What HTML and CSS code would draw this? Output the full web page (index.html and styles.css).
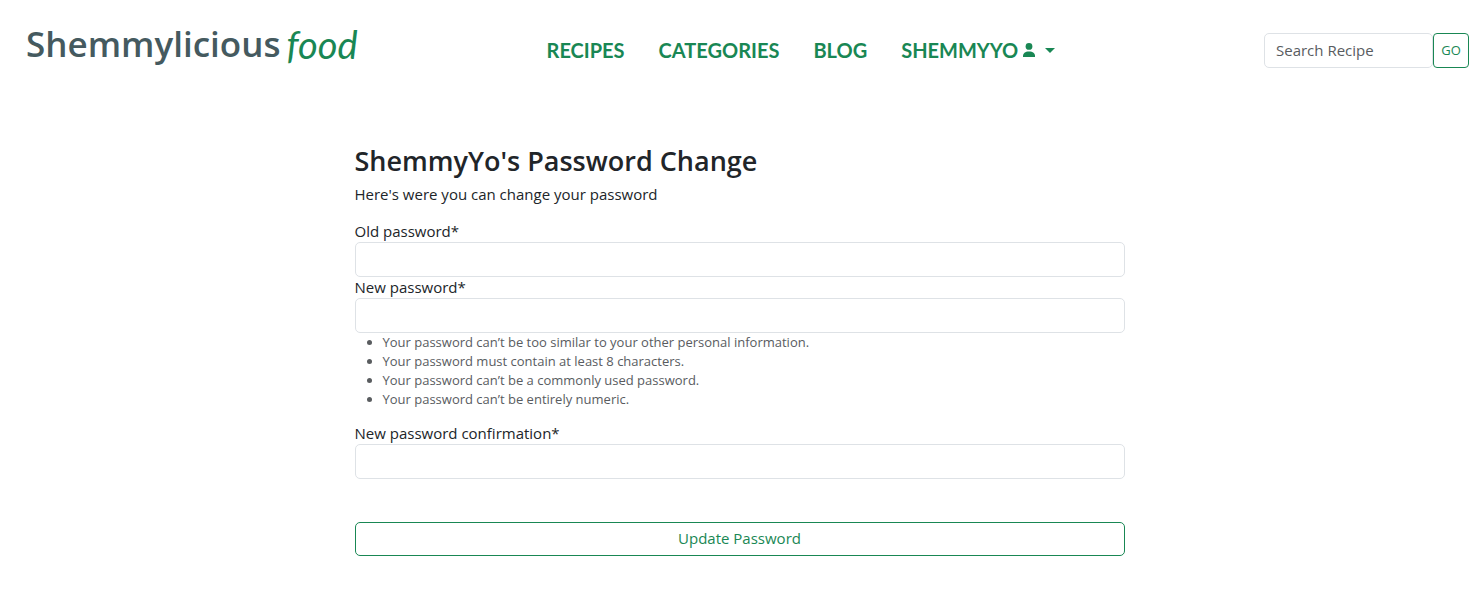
FILE: index.html
```html
<!DOCTYPE html>
<html lang="en">
<head>
<meta charset="utf-8">
<meta name="viewport" content="width=device-width, initial-scale=1">
<title>Password Change</title>
<link rel="stylesheet" href="styles.css">
</head>
<body>
<header class="header">
  <a class="brand" href="#"><span class="brand-name">Shemmylicious</span><span class="brand-script">food</span></a>
  <nav class="nav">
    <a class="nav-link" href="#">RECIPES</a>
    <a class="nav-link" href="#">CATEGORIES</a>
    <a class="nav-link" href="#">BLOG</a>
    <a class="nav-link" href="#">SHEMMYYO
      <svg class="user-icon" viewBox="0 0 12 14" aria-hidden="true"><circle cx="6" cy="3.400" r="3.400"/><path d="M0 14v-1c0-2.800 2-4.600 6-4.600s6 1.800 6 4.600v1z"/></svg>
      <svg class="caret" viewBox="0 0 10 5" aria-hidden="true"><path d="M0 0h10L5 5z"/></svg>
    </a>
  </nav>
  <form class="search">
    <input class="field search-field" type="search" placeholder="Search Recipe" aria-label="Search Recipe">
    <button class="button go-button" type="submit">GO</button>
  </form>
</header>
<main class="content">
  <h1 class="title">ShemmyYo's Password Change</h1>
  <p class="intro">Here's were you can change your password</p>
  <form class="form">
    <label class="label" for="old">Old password*</label>
    <input class="field" id="old" type="password">
    <label class="label" for="new">New password*</label>
    <input class="field" id="new" type="password" aria-describedby="rules">
    <ul class="rules" id="rules">
      <li>Your password can’t be too similar to your other personal information.</li>
      <li>Your password must contain at least 8 characters.</li>
      <li>Your password can’t be a commonly used password.</li>
      <li>Your password can’t be entirely numeric.</li>
    </ul>
    <label class="label" for="confirm">New password confirmation*</label>
    <input class="field" id="confirm" type="password">
    <button class="button submit" type="submit">Update Password</button>
  </form>
</main>
</body>
</html>
```
FILE: styles.css
```css
* { box-sizing: border-box; }
body {
  margin: 0;
  background: #fff;
  color: #212529;
  font: 15px/21px "Open Sans", "Noto Sans", sans-serif;
}
.header {
  display: flex;
  align-items: center;
  justify-content: space-between;
  min-height: 100px;
  padding: 0 8px 0 26px;
}
.brand {
  display: flex;
  align-items: center;
  gap: 6px;
  padding-bottom: 12px;
  text-decoration: none;
  line-height: 64px;
}
.brand-name { color: #455a5f; font-size: 35px; font-weight: 600; }
.brand-script { color: #198754; font: italic 400 38px/64px Lato, cursive; }
.nav { display: flex; margin-right: 20px; }
.nav-link {
  display: flex;
  align-items: center;
  padding: 8px 17px;
  color: #198754;
  font: 700 20px/24px Lato, sans-serif;
  text-decoration: none;
}
.user-icon { width: 12px; height: 14px; margin-left: 5px; fill: currentColor; }
.caret { width: 10px; height: 5px; margin-left: 10px; fill: currentColor; }
.search { display: flex; }
.field {
  display: block;
  width: 100%;
  height: 35px;
  padding: 6px 11px;
  border: 1px solid #dee2e6;
  border-radius: 5px;
  background: #fff;
  color: #212529;
  font: inherit;
}
.field::placeholder { color: #595c5f; opacity: 1; }
.search-field { width: 169px; font-size: 15px; appearance: none; }
.button {
  border: 1px solid #198754;
  border-radius: 5px;
  background: #fff;
  color: #198754;
  font: inherit;
}
.go-button { width: 36px; padding: 0; border-radius: 4px; font-size: 13px; }
.content {
  width: 100%;
  max-width: 800px;
  margin: 0 auto;
  padding: 45px 14px 46px 16px;
}
.title { margin: 0 0 7px; font-size: 27px; line-height: 32px; font-weight: 600; }
.intro { margin: 0 0 16px; }
.form { display: flex; flex-direction: column; }
.rules {
  margin: 0 0 14px;
  padding-left: 28px;
  color: #595c5f;
  font-size: 13px;
  line-height: 19px;
}
.submit { height: 34px; margin-top: 43px; padding: 0 0 2px; }
```
